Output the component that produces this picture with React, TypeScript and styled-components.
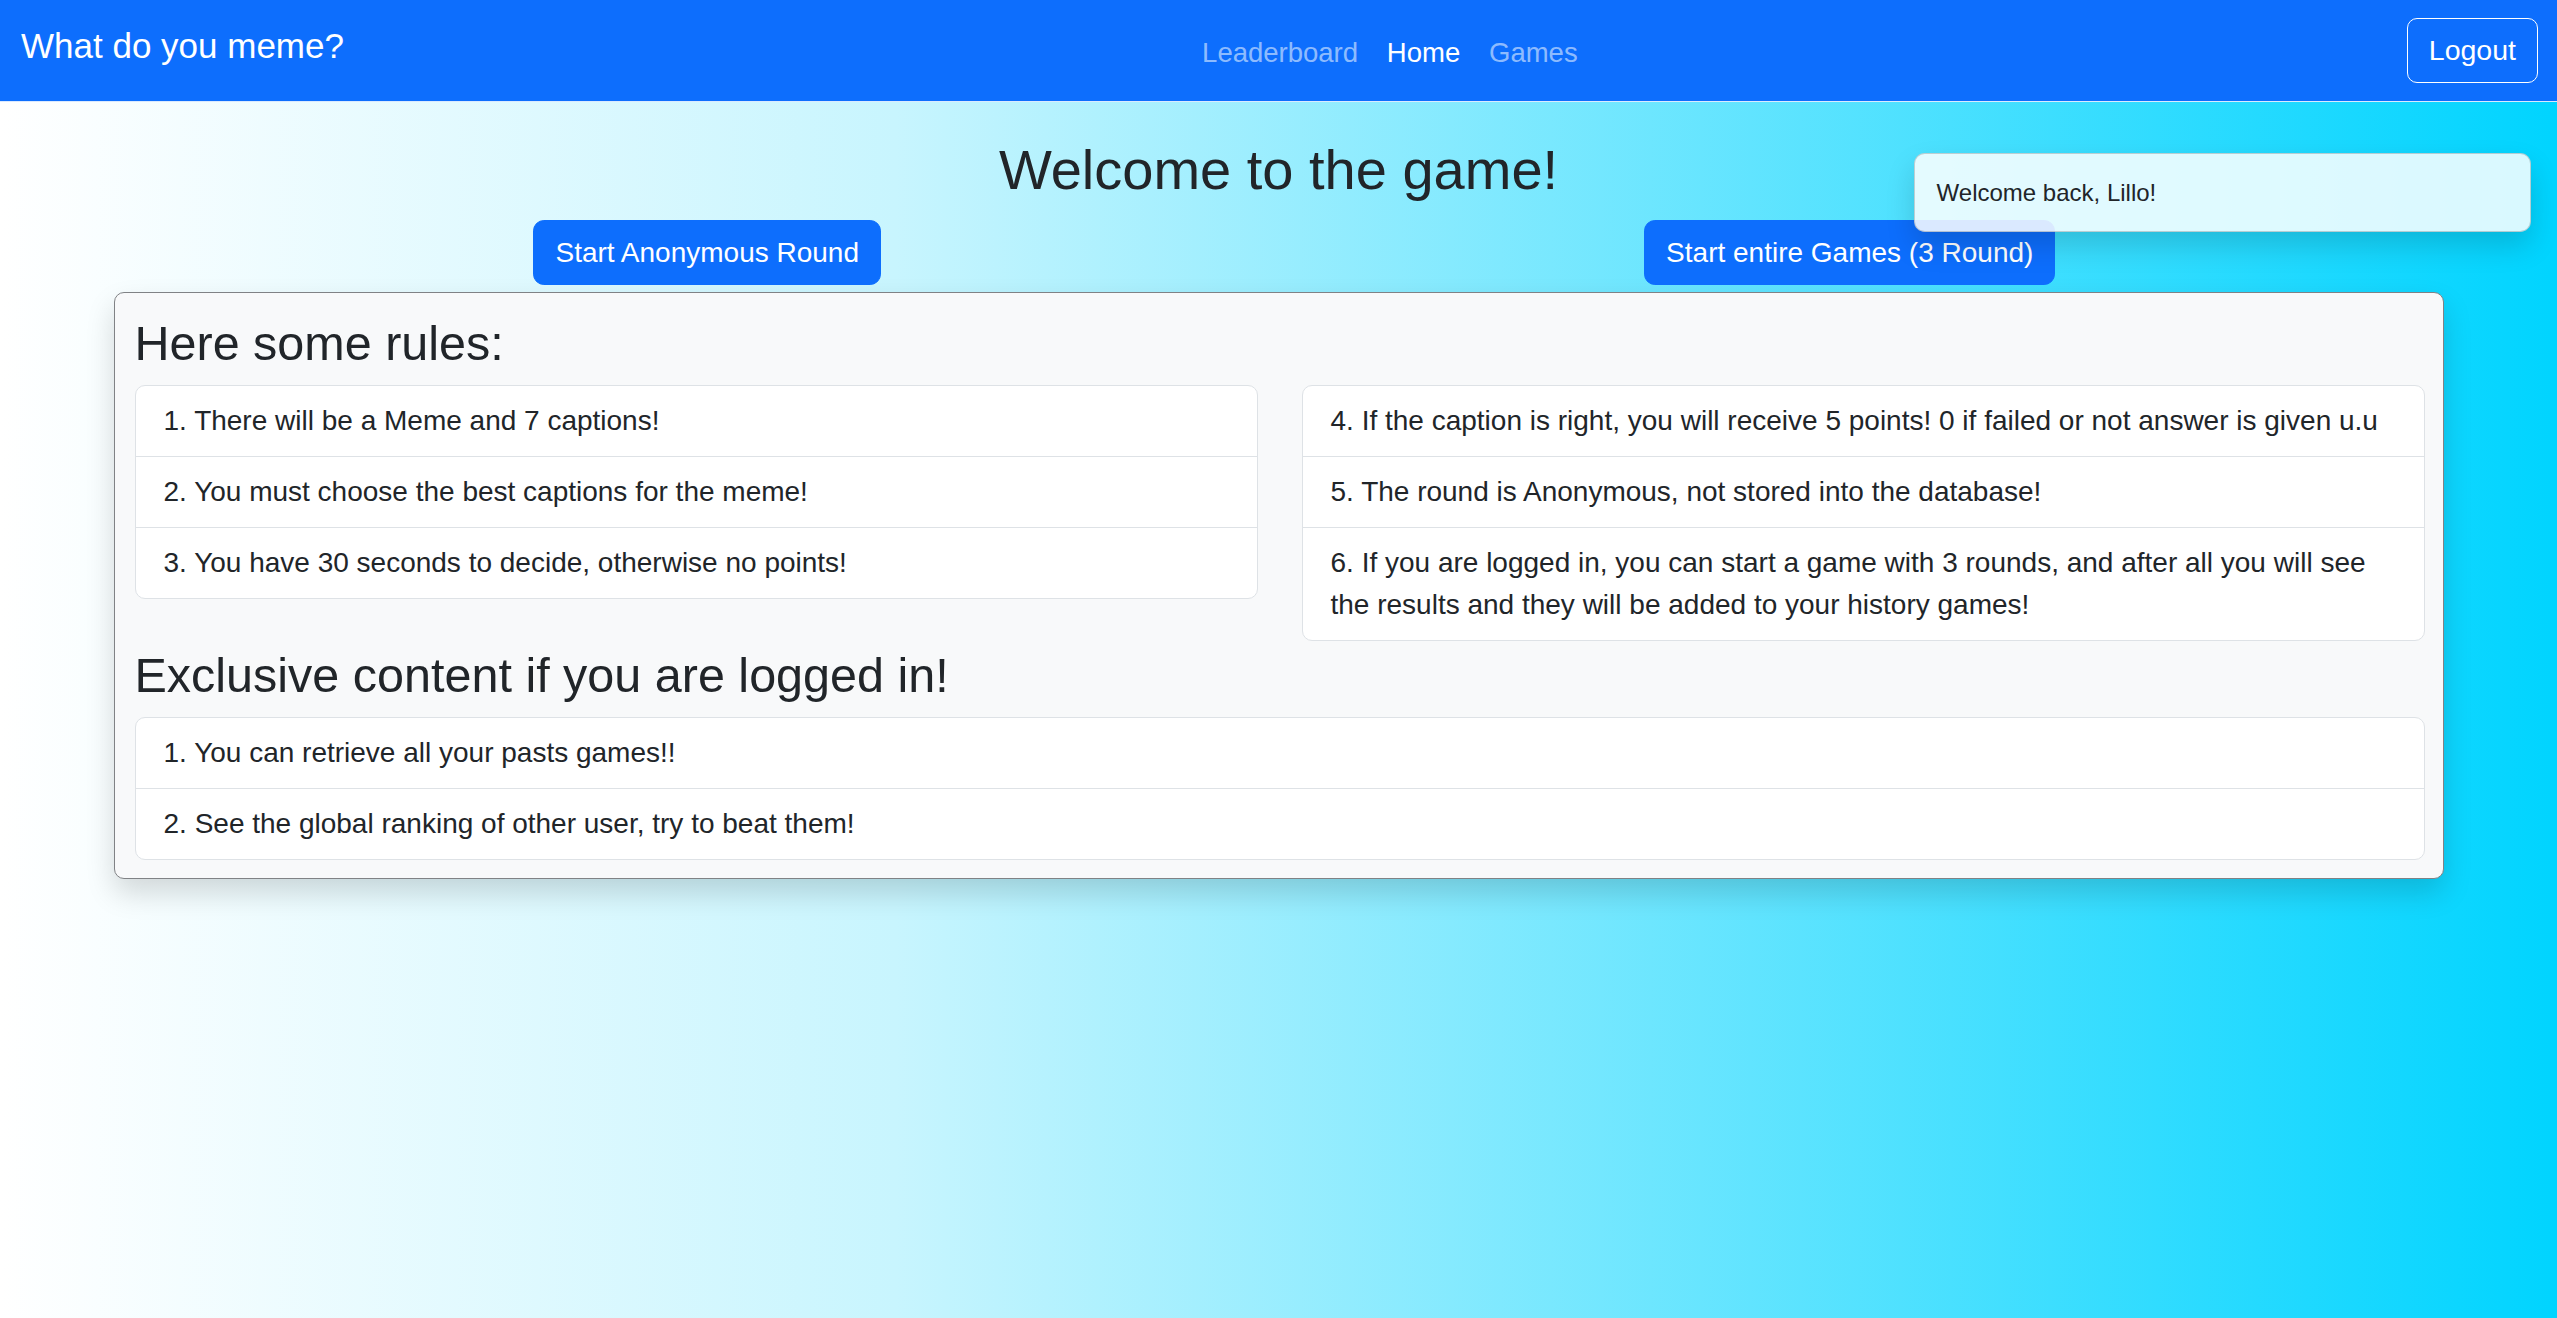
import React from "react";
import styled, { createGlobalStyle } from "styled-components";

const GlobalStyle = createGlobalStyle`
  html, body {
    margin: 0;
    padding: 0;
    overflow: hidden;
  }
  body {
    font-family: "Liberation Sans", Arial, sans-serif;
    color: #212529;
  }
  * { box-sizing: border-box; }
`;

const Page = styled.div`
  position: relative;
  height: 100vh;
  overflow: hidden;
  background: linear-gradient(90deg, #ffffff 0%, #c8f5fe 35%, #00d4ff 100%);
`;

const Navbar = styled.nav`
  display: flex;
  align-items: center;
  height: 102px;
  padding: 0 19px 0 21px;
  background: #0d6efd;
  border-bottom: 1px solid rgba(255, 255, 255, 0.85);
`;

const Brand = styled.a`
  font-size: 35px;
  line-height: 52px;
  color: #ffffff;
  margin-right: 29px;
  margin-bottom: 9px;
  text-decoration: none;
  white-space: nowrap;
`;

const NavList = styled.div`
  display: flex;
  margin: 0 auto;
  padding-top: 5px;
`;

const NavLink = styled.a<{ $active?: boolean }>`
  font-size: 27.5px;
  line-height: 42px;
  padding: 0 14.4px;
  color: ${(p) => (p.$active ? "#ffffff" : "rgba(255, 255, 255, 0.55)")};
  text-decoration: none;
  white-space: nowrap;
`;

const OutlineButton = styled.button`
  height: 65px;
  padding: 0 21px;
  font-family: inherit;
  font-size: 28.5px;
  color: #ffffff;
  background: transparent;
  border: 1px solid #ffffff;
  border-radius: 10px;
`;

const Main = styled.main`
  width: 2330px;
  margin: 0 auto;
  padding-top: 34px;
`;

const Title = styled.h2`
  margin: 0;
  font-size: 56px;
  line-height: 67px;
  font-weight: 400;
  text-align: center;
`;

const ButtonRow = styled.div`
  display: grid;
  grid-template-columns: 1fr 1fr;
  width: 2285px;
  margin: 17px auto 0;
  justify-items: center;
`;

const PrimaryButton = styled.button`
  height: 65px;
  padding: 0 21px;
  font-family: inherit;
  font-size: 28px;
  color: #ffffff;
  background: #0d6efd;
  border: 1px solid #0d6efd;
  border-radius: 10.8px;
`;

const Card = styled.section`
  margin-top: 7px;
  padding: 20px 18px 18px 20px;
  background: #f8f9fa;
  border: 1px solid #808285;
  border-radius: 10px;
  box-shadow: 0 14px 29px rgba(0, 0, 0, 0.15);
`;

const Heading = styled.h3<{ $spaced?: boolean }>`
  margin: ${(p) => (p.$spaced ? "4px" : "0")} 0 12px;
  font-size: 48.5px;
  line-height: 60px;
  font-weight: 400;
`;

const RulesGrid = styled.div`
  display: grid;
  grid-template-columns: 1fr 1fr;
  column-gap: 44px;
  align-items: start;
`;

const ListGroup = styled.ol`
  list-style: none;
  margin: 0;
  padding: 0;
  background: #ffffff;
  border: 1px solid #dee2e6;
  border-radius: 10px;
`;

const ListItem = styled.li`
  padding: 14px 28px;
  font-size: 28px;
  line-height: 42px;
  & + & {
    border-top: 1px solid #dee2e6;
  }
`;

const Toast = styled.div`
  position: absolute;
  top: 153px;
  right: 26px;
  width: 617px;
  height: 79px;
  padding: 0 21.6px;
  display: flex;
  align-items: center;
  font-size: 24px;
  color: #212529;
  background: rgba(255, 255, 255, 0.85);
  border: 1px solid rgba(0, 0, 0, 0.175);
  border-radius: 10.8px;
  box-shadow: 0 14px 29px rgba(0, 0, 0, 0.15);
`;

const leftRules = [
  "1. There will be a Meme and 7 captions!",
  "2. You must choose the best captions for the meme!",
  "3. You have 30 seconds to decide, otherwise no points!",
];

const rightRules = [
  "4. If the caption is right, you will receive 5 points! 0 if failed or not answer is given u.u",
  "5. The round is Anonymous, not stored into the database!",
  "6. If you are logged in, you can start a game with 3 rounds, and after all you will see the results and they will be added to your history games!",
];

const exclusive = [
  "1. You can retrieve all your pasts games!!",
  "2. See the global ranking of other user, try to beat them!",
];

export default function App() {
  return (
    <>
      <GlobalStyle />
      <Page>
        <Navbar>
          <Brand>What do you meme?</Brand>
          <NavList>
            <NavLink>Leaderboard</NavLink>
            <NavLink $active>Home</NavLink>
            <NavLink>Games</NavLink>
          </NavList>
          <OutlineButton>Logout</OutlineButton>
        </Navbar>
        <Main>
          <Title>Welcome to the game!</Title>
          <ButtonRow>
            <PrimaryButton>Start Anonymous Round</PrimaryButton>
            <PrimaryButton>Start entire Games (3 Round)</PrimaryButton>
          </ButtonRow>
          <Card>
            <Heading>Here some rules:</Heading>
            <RulesGrid>
              <ListGroup>
                {leftRules.map((r) => (
                  <ListItem key={r}>{r}</ListItem>
                ))}
              </ListGroup>
              <ListGroup>
                {rightRules.map((r) => (
                  <ListItem key={r}>{r}</ListItem>
                ))}
              </ListGroup>
            </RulesGrid>
            <Heading $spaced>Exclusive content if you are logged in!</Heading>
            <ListGroup>
              {exclusive.map((r) => (
                <ListItem key={r}>{r}</ListItem>
              ))}
            </ListGroup>
          </Card>
        </Main>
        <Toast>Welcome back, Lillo!</Toast>
      </Page>
    </>
  );
}
